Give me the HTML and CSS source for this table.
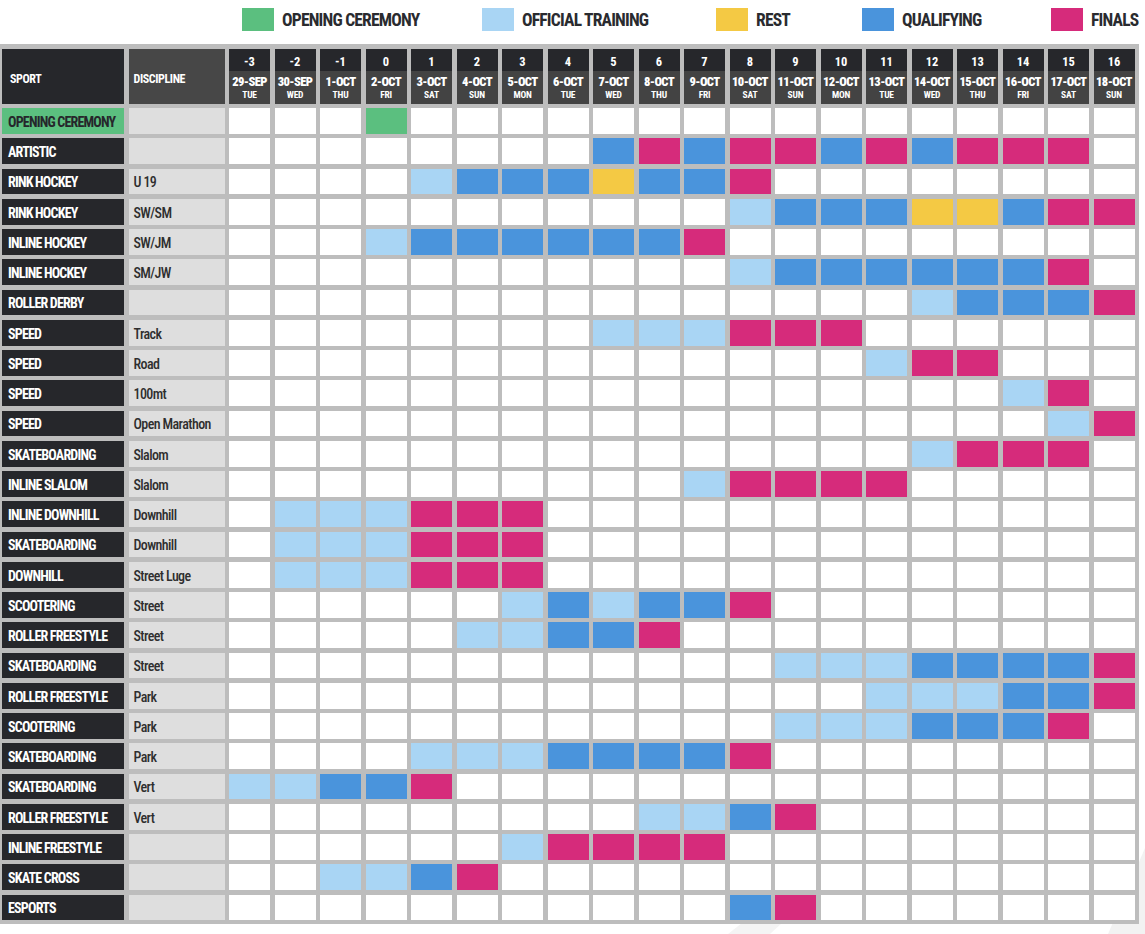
FILE: index.html
```html
<!DOCTYPE html>
<html lang="en">
<head>
<meta charset="utf-8">
<title>Schedule</title>
<link rel="stylesheet" href="styles.css">
</head>
<body>
<div class="page">
  <svg class="watermark" width="1145" height="934" viewBox="0 0 1145 934" aria-hidden="true">
    <polygon points="1145,848 1145,934 1108,934" fill="#f2f2f2"/>
    <polygon points="728,934 742,923 782,923 770,934" fill="#f4f4f4"/>
  </svg>
  <div class="legend">
    <div class="legend-item"><span class="swatch g"></span><span>OPENING CEREMONY</span></div>
    <div class="legend-item"><span class="swatch t"></span><span>OFFICIAL TRAINING</span></div>
    <div class="legend-item"><span class="swatch r"></span><span>REST</span></div>
    <div class="legend-item"><span class="swatch q"></span><span>QUALIFYING</span></div>
    <div class="legend-item"><span class="swatch f"></span><span>FINALS</span></div>
  </div>
  <div class="schedule">
    <div class="hd-sport">SPORT</div>
    <div class="hd-disc">DISCIPLINE</div>
    <div class="day"><div class="num">-3</div><div class="date"><b>29-SEP</b><span>TUE</span></div></div>
    <div class="day"><div class="num">-2</div><div class="date"><b>30-SEP</b><span>WED</span></div></div>
    <div class="day"><div class="num">-1</div><div class="date"><b>1-OCT</b><span>THU</span></div></div>
    <div class="day"><div class="num">0</div><div class="date"><b>2-OCT</b><span>FRI</span></div></div>
    <div class="day"><div class="num">1</div><div class="date"><b>3-OCT</b><span>SAT</span></div></div>
    <div class="day"><div class="num">2</div><div class="date"><b>4-OCT</b><span>SUN</span></div></div>
    <div class="day"><div class="num">3</div><div class="date"><b>5-OCT</b><span>MON</span></div></div>
    <div class="day"><div class="num">4</div><div class="date"><b>6-OCT</b><span>TUE</span></div></div>
    <div class="day"><div class="num">5</div><div class="date"><b>7-OCT</b><span>WED</span></div></div>
    <div class="day"><div class="num">6</div><div class="date"><b>8-OCT</b><span>THU</span></div></div>
    <div class="day"><div class="num">7</div><div class="date"><b>9-OCT</b><span>FRI</span></div></div>
    <div class="day"><div class="num">8</div><div class="date"><b>10-OCT</b><span>SAT</span></div></div>
    <div class="day"><div class="num">9</div><div class="date"><b>11-OCT</b><span>SUN</span></div></div>
    <div class="day"><div class="num">10</div><div class="date"><b>12-OCT</b><span>MON</span></div></div>
    <div class="day"><div class="num">11</div><div class="date"><b>13-OCT</b><span>TUE</span></div></div>
    <div class="day"><div class="num">12</div><div class="date"><b>14-OCT</b><span>WED</span></div></div>
    <div class="day"><div class="num">13</div><div class="date"><b>15-OCT</b><span>THU</span></div></div>
    <div class="day"><div class="num">14</div><div class="date"><b>16-OCT</b><span>FRI</span></div></div>
    <div class="day"><div class="num">15</div><div class="date"><b>17-OCT</b><span>SAT</span></div></div>
    <div class="day"><div class="num">16</div><div class="date"><b>18-OCT</b><span>SUN</span></div></div>

    <div class="sport opening">OPENING CEREMONY</div><div class="disc"></div>
    <span class="c"></span><span class="c"></span><span class="c"></span><span class="c g"></span><span class="c"></span><span class="c"></span><span class="c"></span><span class="c"></span><span class="c"></span><span class="c"></span><span class="c"></span><span class="c"></span><span class="c"></span><span class="c"></span><span class="c"></span><span class="c"></span><span class="c"></span><span class="c"></span><span class="c"></span><span class="c"></span>

    <div class="sport">ARTISTIC</div><div class="disc"></div>
    <span class="c"></span><span class="c"></span><span class="c"></span><span class="c"></span><span class="c"></span><span class="c"></span><span class="c"></span><span class="c"></span><span class="c q"></span><span class="c f"></span><span class="c q"></span><span class="c f"></span><span class="c f"></span><span class="c q"></span><span class="c f"></span><span class="c q"></span><span class="c f"></span><span class="c f"></span><span class="c f"></span><span class="c"></span>

    <div class="sport">RINK HOCKEY</div><div class="disc">U 19</div>
    <span class="c"></span><span class="c"></span><span class="c"></span><span class="c"></span><span class="c t"></span><span class="c q"></span><span class="c q"></span><span class="c q"></span><span class="c r"></span><span class="c q"></span><span class="c q"></span><span class="c f"></span><span class="c"></span><span class="c"></span><span class="c"></span><span class="c"></span><span class="c"></span><span class="c"></span><span class="c"></span><span class="c"></span>

    <div class="sport">RINK HOCKEY</div><div class="disc">SW/SM</div>
    <span class="c"></span><span class="c"></span><span class="c"></span><span class="c"></span><span class="c"></span><span class="c"></span><span class="c"></span><span class="c"></span><span class="c"></span><span class="c"></span><span class="c"></span><span class="c t"></span><span class="c q"></span><span class="c q"></span><span class="c q"></span><span class="c r"></span><span class="c r"></span><span class="c q"></span><span class="c f"></span><span class="c f"></span>

    <div class="sport">INLINE HOCKEY</div><div class="disc">SW/JM</div>
    <span class="c"></span><span class="c"></span><span class="c"></span><span class="c t"></span><span class="c q"></span><span class="c q"></span><span class="c q"></span><span class="c q"></span><span class="c q"></span><span class="c q"></span><span class="c f"></span><span class="c"></span><span class="c"></span><span class="c"></span><span class="c"></span><span class="c"></span><span class="c"></span><span class="c"></span><span class="c"></span><span class="c"></span>

    <div class="sport">INLINE HOCKEY</div><div class="disc">SM/JW</div>
    <span class="c"></span><span class="c"></span><span class="c"></span><span class="c"></span><span class="c"></span><span class="c"></span><span class="c"></span><span class="c"></span><span class="c"></span><span class="c"></span><span class="c"></span><span class="c t"></span><span class="c q"></span><span class="c q"></span><span class="c q"></span><span class="c q"></span><span class="c q"></span><span class="c q"></span><span class="c f"></span><span class="c"></span>

    <div class="sport">ROLLER DERBY</div><div class="disc"></div>
    <span class="c"></span><span class="c"></span><span class="c"></span><span class="c"></span><span class="c"></span><span class="c"></span><span class="c"></span><span class="c"></span><span class="c"></span><span class="c"></span><span class="c"></span><span class="c"></span><span class="c"></span><span class="c"></span><span class="c"></span><span class="c t"></span><span class="c q"></span><span class="c q"></span><span class="c q"></span><span class="c f"></span>

    <div class="sport">SPEED</div><div class="disc">Track</div>
    <span class="c"></span><span class="c"></span><span class="c"></span><span class="c"></span><span class="c"></span><span class="c"></span><span class="c"></span><span class="c"></span><span class="c t"></span><span class="c t"></span><span class="c t"></span><span class="c f"></span><span class="c f"></span><span class="c f"></span><span class="c"></span><span class="c"></span><span class="c"></span><span class="c"></span><span class="c"></span><span class="c"></span>

    <div class="sport">SPEED</div><div class="disc">Road</div>
    <span class="c"></span><span class="c"></span><span class="c"></span><span class="c"></span><span class="c"></span><span class="c"></span><span class="c"></span><span class="c"></span><span class="c"></span><span class="c"></span><span class="c"></span><span class="c"></span><span class="c"></span><span class="c"></span><span class="c t"></span><span class="c f"></span><span class="c f"></span><span class="c"></span><span class="c"></span><span class="c"></span>

    <div class="sport">SPEED</div><div class="disc">100mt</div>
    <span class="c"></span><span class="c"></span><span class="c"></span><span class="c"></span><span class="c"></span><span class="c"></span><span class="c"></span><span class="c"></span><span class="c"></span><span class="c"></span><span class="c"></span><span class="c"></span><span class="c"></span><span class="c"></span><span class="c"></span><span class="c"></span><span class="c"></span><span class="c t"></span><span class="c f"></span><span class="c"></span>

    <div class="sport">SPEED</div><div class="disc">Open Marathon</div>
    <span class="c"></span><span class="c"></span><span class="c"></span><span class="c"></span><span class="c"></span><span class="c"></span><span class="c"></span><span class="c"></span><span class="c"></span><span class="c"></span><span class="c"></span><span class="c"></span><span class="c"></span><span class="c"></span><span class="c"></span><span class="c"></span><span class="c"></span><span class="c"></span><span class="c t"></span><span class="c f"></span>

    <div class="sport">SKATEBOARDING</div><div class="disc">Slalom</div>
    <span class="c"></span><span class="c"></span><span class="c"></span><span class="c"></span><span class="c"></span><span class="c"></span><span class="c"></span><span class="c"></span><span class="c"></span><span class="c"></span><span class="c"></span><span class="c"></span><span class="c"></span><span class="c"></span><span class="c"></span><span class="c t"></span><span class="c f"></span><span class="c f"></span><span class="c f"></span><span class="c"></span>

    <div class="sport">INLINE SLALOM</div><div class="disc">Slalom</div>
    <span class="c"></span><span class="c"></span><span class="c"></span><span class="c"></span><span class="c"></span><span class="c"></span><span class="c"></span><span class="c"></span><span class="c"></span><span class="c"></span><span class="c t"></span><span class="c f"></span><span class="c f"></span><span class="c f"></span><span class="c f"></span><span class="c"></span><span class="c"></span><span class="c"></span><span class="c"></span><span class="c"></span>

    <div class="sport">INLINE DOWNHILL</div><div class="disc">Downhill</div>
    <span class="c"></span><span class="c t"></span><span class="c t"></span><span class="c t"></span><span class="c f"></span><span class="c f"></span><span class="c f"></span><span class="c"></span><span class="c"></span><span class="c"></span><span class="c"></span><span class="c"></span><span class="c"></span><span class="c"></span><span class="c"></span><span class="c"></span><span class="c"></span><span class="c"></span><span class="c"></span><span class="c"></span>

    <div class="sport">SKATEBOARDING</div><div class="disc">Downhill</div>
    <span class="c"></span><span class="c t"></span><span class="c t"></span><span class="c t"></span><span class="c f"></span><span class="c f"></span><span class="c f"></span><span class="c"></span><span class="c"></span><span class="c"></span><span class="c"></span><span class="c"></span><span class="c"></span><span class="c"></span><span class="c"></span><span class="c"></span><span class="c"></span><span class="c"></span><span class="c"></span><span class="c"></span>

    <div class="sport">DOWNHILL</div><div class="disc">Street Luge</div>
    <span class="c"></span><span class="c t"></span><span class="c t"></span><span class="c t"></span><span class="c f"></span><span class="c f"></span><span class="c f"></span><span class="c"></span><span class="c"></span><span class="c"></span><span class="c"></span><span class="c"></span><span class="c"></span><span class="c"></span><span class="c"></span><span class="c"></span><span class="c"></span><span class="c"></span><span class="c"></span><span class="c"></span>

    <div class="sport">SCOOTERING</div><div class="disc">Street</div>
    <span class="c"></span><span class="c"></span><span class="c"></span><span class="c"></span><span class="c"></span><span class="c"></span><span class="c t"></span><span class="c q"></span><span class="c t"></span><span class="c q"></span><span class="c q"></span><span class="c f"></span><span class="c"></span><span class="c"></span><span class="c"></span><span class="c"></span><span class="c"></span><span class="c"></span><span class="c"></span><span class="c"></span>

    <div class="sport">ROLLER FREESTYLE</div><div class="disc">Street</div>
    <span class="c"></span><span class="c"></span><span class="c"></span><span class="c"></span><span class="c"></span><span class="c t"></span><span class="c t"></span><span class="c q"></span><span class="c q"></span><span class="c f"></span><span class="c"></span><span class="c"></span><span class="c"></span><span class="c"></span><span class="c"></span><span class="c"></span><span class="c"></span><span class="c"></span><span class="c"></span><span class="c"></span>

    <div class="sport">SKATEBOARDING</div><div class="disc">Street</div>
    <span class="c"></span><span class="c"></span><span class="c"></span><span class="c"></span><span class="c"></span><span class="c"></span><span class="c"></span><span class="c"></span><span class="c"></span><span class="c"></span><span class="c"></span><span class="c"></span><span class="c t"></span><span class="c t"></span><span class="c t"></span><span class="c q"></span><span class="c q"></span><span class="c q"></span><span class="c q"></span><span class="c f"></span>

    <div class="sport">ROLLER FREESTYLE</div><div class="disc">Park</div>
    <span class="c"></span><span class="c"></span><span class="c"></span><span class="c"></span><span class="c"></span><span class="c"></span><span class="c"></span><span class="c"></span><span class="c"></span><span class="c"></span><span class="c"></span><span class="c"></span><span class="c"></span><span class="c"></span><span class="c t"></span><span class="c t"></span><span class="c t"></span><span class="c q"></span><span class="c q"></span><span class="c f"></span>

    <div class="sport">SCOOTERING</div><div class="disc">Park</div>
    <span class="c"></span><span class="c"></span><span class="c"></span><span class="c"></span><span class="c"></span><span class="c"></span><span class="c"></span><span class="c"></span><span class="c"></span><span class="c"></span><span class="c"></span><span class="c"></span><span class="c t"></span><span class="c t"></span><span class="c t"></span><span class="c q"></span><span class="c q"></span><span class="c q"></span><span class="c f"></span><span class="c"></span>

    <div class="sport">SKATEBOARDING</div><div class="disc">Park</div>
    <span class="c"></span><span class="c"></span><span class="c"></span><span class="c"></span><span class="c t"></span><span class="c t"></span><span class="c t"></span><span class="c q"></span><span class="c q"></span><span class="c q"></span><span class="c q"></span><span class="c f"></span><span class="c"></span><span class="c"></span><span class="c"></span><span class="c"></span><span class="c"></span><span class="c"></span><span class="c"></span><span class="c"></span>

    <div class="sport">SKATEBOARDING</div><div class="disc">Vert</div>
    <span class="c t"></span><span class="c t"></span><span class="c q"></span><span class="c q"></span><span class="c f"></span><span class="c"></span><span class="c"></span><span class="c"></span><span class="c"></span><span class="c"></span><span class="c"></span><span class="c"></span><span class="c"></span><span class="c"></span><span class="c"></span><span class="c"></span><span class="c"></span><span class="c"></span><span class="c"></span><span class="c"></span>

    <div class="sport">ROLLER FREESTYLE</div><div class="disc">Vert</div>
    <span class="c"></span><span class="c"></span><span class="c"></span><span class="c"></span><span class="c"></span><span class="c"></span><span class="c"></span><span class="c"></span><span class="c"></span><span class="c t"></span><span class="c t"></span><span class="c q"></span><span class="c f"></span><span class="c"></span><span class="c"></span><span class="c"></span><span class="c"></span><span class="c"></span><span class="c"></span><span class="c"></span>

    <div class="sport">INLINE FREESTYLE</div><div class="disc"></div>
    <span class="c"></span><span class="c"></span><span class="c"></span><span class="c"></span><span class="c"></span><span class="c"></span><span class="c t"></span><span class="c f"></span><span class="c f"></span><span class="c f"></span><span class="c f"></span><span class="c"></span><span class="c"></span><span class="c"></span><span class="c"></span><span class="c"></span><span class="c"></span><span class="c"></span><span class="c"></span><span class="c"></span>

    <div class="sport">SKATE CROSS</div><div class="disc"></div>
    <span class="c"></span><span class="c"></span><span class="c t"></span><span class="c t"></span><span class="c q"></span><span class="c f"></span><span class="c"></span><span class="c"></span><span class="c"></span><span class="c"></span><span class="c"></span><span class="c"></span><span class="c"></span><span class="c"></span><span class="c"></span><span class="c"></span><span class="c"></span><span class="c"></span><span class="c"></span><span class="c"></span>

    <div class="sport">ESPORTS</div><div class="disc"></div>
    <span class="c"></span><span class="c"></span><span class="c"></span><span class="c"></span><span class="c"></span><span class="c"></span><span class="c"></span><span class="c"></span><span class="c"></span><span class="c"></span><span class="c"></span><span class="c q"></span><span class="c f"></span><span class="c"></span><span class="c"></span><span class="c"></span><span class="c"></span><span class="c"></span><span class="c"></span><span class="c"></span>
  </div>
</div>
</body>
</html>
```

FILE: styles.css
```css
* { box-sizing: border-box; }

body {
  margin: 0;
  background: #ffffff;
  font-family: Roboto, "DejaVu Sans Condensed", sans-serif;
  font-stretch: 75%;
}

.page {
  position: relative;
  z-index: 0;
  width: 1145px;
  height: 934px;
  overflow: hidden;
}

.watermark {
  position: absolute;
  left: 0;
  top: 0;
  z-index: -1;
}

.legend {
  display: grid;
  grid-template-columns: 240px 234px 146px 189px auto;
  padding: 7px 0 0 242px;
  height: 30px;
  margin-bottom: 14px;
}

.legend-item {
  display: flex;
  align-items: center;
  gap: 8px;
  font-weight: 700;
  font-size: 17.5px;
  letter-spacing: -0.8px;
  color: #2a2b2f;
  padding-top: 1px;
}

.swatch {
  width: 32px;
  height: 23px;
  flex: none;
}

.schedule {
  display: grid;
  width: max-content;
  background: #bdbdbd;
  padding: 5px 4px 4px 2px;
  grid-template-columns: 122px 96px repeat(20, 41px);
  grid-template-rows: 54.5px repeat(27, 25.75px);
  gap: 4.5px;
}

.hd-sport,
.hd-disc {
  color: #ffffff;
  font-weight: 700;
  font-size: 12px;
  letter-spacing: -0.4px;
  display: flex;
  align-items: center;
  padding: 5px 0 0 8px;
}

.hd-sport { background: #26272b; }
.hd-disc { background: #474747; padding-left: 5px; }

.day {
  display: flex;
  flex-direction: column;
  color: #ffffff;
  text-align: center;
  font-weight: 700;
}

.num {
  height: 22px;
  background: #26272b;
  font-size: 12.5px;
  display: flex;
  align-items: center;
  justify-content: center;
  padding-top: 3px;
}

.date {
  flex: 1;
  background: #434343;
  display: flex;
  flex-direction: column;
  justify-content: center;
  padding-top: 1px;
  white-space: nowrap;
}

.date b {
  font-size: 12.5px;
  line-height: 14px;
  letter-spacing: -0.6px;
}

.date span {
  font-size: 9.5px;
  line-height: 11px;
  letter-spacing: -0.2px;
}

.sport {
  background: #26272b;
  color: #ffffff;
  font-weight: 700;
  font-size: 14px;
  letter-spacing: -0.8px;
  display: flex;
  align-items: center;
  padding: 2px 0 0 6px;
  white-space: nowrap;
}

.sport.opening {
  background: #5bbf7f;
  color: #26272b;
}

.disc {
  background: #dedede;
  color: #2e2e2e;
  font-weight: 500;
  font-size: 14px;
  letter-spacing: -0.6px;
  display: flex;
  align-items: center;
  padding: 2px 0 0 5px;
  white-space: nowrap;
}

.c { background: #ffffff; }
.g { background: #5bbf7f; }
.t { background: #a9d5f4; }
.r { background: #f4c944; }
.q { background: #4a94dc; }
.f { background: #d62b7b; }
```
